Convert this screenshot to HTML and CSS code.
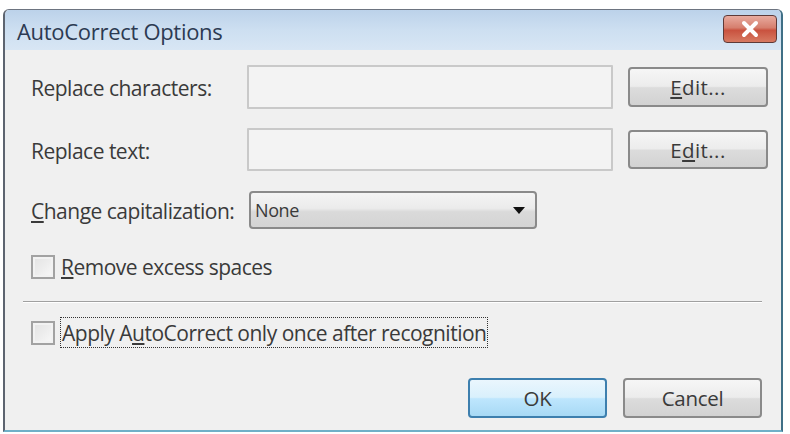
FILE: index.html
```html
<!DOCTYPE html>
<html>
<head>
<meta charset="utf-8">
<link rel="stylesheet" href="styles.css">
</head>
<body>
<div class="window">
  <div class="titlebar">
    <span class="title">AutoCorrect Options</span>
    <div class="close">
      <svg width="26" height="18" viewBox="0 0 26 18"><path d="M7 3 L19 15 M19 3 L7 15" stroke="#ffffff" stroke-width="4" stroke-linecap="round"/></svg>
    </div>
  </div>
  <div class="content">
    <div class="row row1">
      <span class="label">Replace characters:</span>
      <div class="input"></div>
      <div class="btn edit"><span><u>E</u>dit...</span></div>
    </div>
    <div class="row row2">
      <span class="label">Replace text:</span>
      <div class="input"></div>
      <div class="btn edit"><span>E<u>d</u>it...</span></div>
    </div>
    <div class="row row3">
      <span class="label"><u>C</u>hange capitalization:</span>
      <div class="select"><span>None</span><span class="arrow"></span></div>
    </div>
    <div class="check-row row4">
      <span class="checkbox"></span>
      <span class="check-label"><u>R</u>emove excess spaces</span>
    </div>
    <div class="separator"></div>
    <div class="check-row row5">
      <span class="checkbox"></span>
      <span class="check-label focus">Apply A<u>u</u>toCorrect only once after recognition</span>
    </div>
    <div class="footer">
      <div class="btn ok"><span>OK</span></div>
      <div class="btn cancel"><span>Cancel</span></div>
    </div>
  </div>
</div>
</body>
</html>
```
FILE: styles.css
```css
html, body {
  margin: 0;
  padding: 0;
  background: #ffffff;
}
body {
  font-family: "Open Sans", "Noto Sans", sans-serif;
  color: #3a3a3a;
}
.window {
  margin: 9px 0 0 3px;
  width: 780px;
  height: 423px;
  box-sizing: border-box;
  border: 1px solid #6d7480;
  border-right: 2px solid #3f6f86;
  border-bottom: 2px solid #6fb0c8;
  border-left: 2px solid #5d6470;
  border-radius: 6px 6px 0 0;
  background: #f0f0f0;
  display: flex;
  flex-direction: column;
  overflow: hidden;
}
.titlebar {
  height: 40px;
  flex: none;
  background: linear-gradient(#bcd2ea, #cddff1 50%, #d8e6f4);
  display: flex;
  align-items: center;
  justify-content: space-between;
  padding: 0 4px 0 12px;
  box-sizing: border-box;
}
.title {
  font-size: 22px;
  color: #2c3a52;
  letter-spacing: -0.3px;
  margin-top: 1px;
}
.close {
  width: 54px;
  height: 28px;
  box-sizing: border-box;
  border: 1px solid #5e3a38;
  border-radius: 4px;
  background: linear-gradient(#e8ab9f, #d67f6e 45%, #c9523f 55%, #d77a62);
  display: flex;
  align-items: center;
  justify-content: center;
  margin-top: -3px;
}
.content {
  flex: 1;
  padding: 15px 0 0 26px;
  display: flex;
  flex-direction: column;
}
.row {
  display: flex;
  align-items: center;
}
.label {
  width: 216px;
  flex: none;
  font-size: 21px;
  letter-spacing: -0.5px;
  padding-top: 2px;
}
.input {
  width: 366px;
  height: 44px;
  box-sizing: border-box;
  border: 2px solid #c9c9c9;
  background: #f3f3f3;
  border-radius: 1px;
}
.row2 {
  margin-top: 19px;
}
.row2 .input {
  height: 43px;
}
.btn {
  box-sizing: border-box;
  height: 40px;
  border: 2px solid #8a8a8a;
  border-radius: 4px;
  background: linear-gradient(#f6f6f6, #ececec 48%, #dcdcdc 52%, #d2d2d2);
  display: flex;
  align-items: center;
  justify-content: center;
  font-size: 20.5px;
  letter-spacing: -0.3px;
  color: #3a3a3a;
}
.edit {
  width: 140px;
  margin-left: 15px;
}
.edit span {
  letter-spacing: 0.4px;
}
.row2 .edit {
  height: 39px;
}
.row3 {
  margin-top: 20px;
}
.select {
  margin-left: 2px;
  width: 288px;
  height: 38px;
  box-sizing: border-box;
  border: 2px solid #8a8a8a;
  border-radius: 4px;
  background: linear-gradient(#f4f4f4, #ebebeb 45%, #dadada 55%, #d4d4d4);
  display: flex;
  align-items: center;
  justify-content: space-between;
  padding: 0 10px 0 4px;
  font-size: 18px;
  letter-spacing: -0.4px;
}
.arrow {
  width: 0;
  height: 0;
  border-left: 6px solid transparent;
  border-right: 6px solid transparent;
  border-top: 7px solid #111111;
}
.check-row {
  display: flex;
  align-items: center;
}
.row4 {
  margin-top: 25px;
  height: 25px;
}
.checkbox {
  width: 24px;
  height: 24px;
  box-sizing: border-box;
  border: 2px solid #a2a2a2;
  background: linear-gradient(135deg, #e2e2e2, #f8f8f8);
  box-shadow: inset 0 0 0 2px #f2f2f2;
  flex: none;
}
.check-label {
  margin-left: 6px;
  font-size: 21px;
  letter-spacing: -0.5px;
}
.separator {
  margin: 22px 0 0 -8px;
  width: 739px;
  height: 1px;
  background: #a0a0a0;
  border-bottom: 1px solid #ffffff;
}
.row5 {
  margin-top: 14px;
  height: 31px;
}
.focus {
  margin-left: 5px;
  border: 1px dotted #333333;
  padding: 0 1px;
  height: 31px;
  box-sizing: border-box;
  display: flex;
  align-items: center;
}
.footer {
  display: flex;
  justify-content: flex-end;
  gap: 16px;
  margin-top: 30px;
  padding-right: 19px;
}
.ok, .cancel {
  width: 139px;
}
.ok {
  border-color: #3d7fae;
  background: linear-gradient(#eaf6fd, #d9f0fc 48%, #bee6fd 52%, #a7d9f5);
}
```
